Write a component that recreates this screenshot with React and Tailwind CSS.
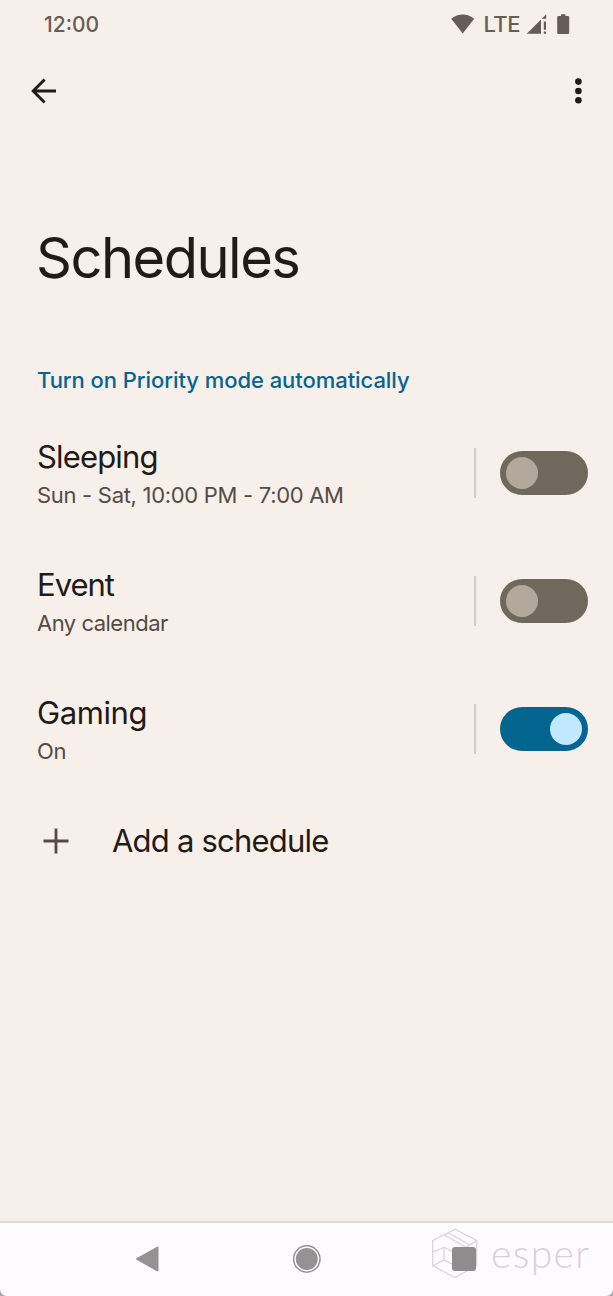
import React, { useState } from "react";

const initialSchedules = [
  {
    id: 1,
    name: "Sleeping",
    nameClass: "tracking-[-0.85px]",
    detail: "Sun - Sat, 10:00 PM - 7:00 AM",
    detailClass: "tracking-[-0.3px]",
    enabled: false,
  },
  {
    id: 2,
    name: "Event",
    nameClass: "tracking-[-1px]",
    detail: "Any calendar",
    detailClass: "tracking-[-0.5px]",
    enabled: false,
  },
  {
    id: 3,
    name: "Gaming",
    nameClass: "tracking-[-0.4px]",
    detail: "On",
    detailClass: "tracking-[-0.3px]",
    enabled: true,
  },
];

const StatusBar = () => (
  <div className="flex h-12 items-center justify-between pl-11 pr-[43px] text-[#665d58]">
    <span className="pt-0.5 text-[21px] font-medium leading-6">12:00</span>
    <div className="flex items-center">
      {/* Wifi */}
      <svg width="24" height="20" viewBox="0 0 24 20" fill="currentColor">
        <path d="M0.2 4.8C7 -1 16.5 -1 23.2 4.8L11.7 19.4Z" />
      </svg>
      <span className="ml-[9px] text-[22px] font-medium leading-6 tracking-[-0.5px]">
        LTE
      </span>
      {/* Signal with no connection */}
      <svg
        className="ml-[7px]"
        width="20"
        height="20"
        viewBox="0 0 20 20"
        fill="currentColor"
      >
        <path d="M-0.4 19.8L14 5.4V19.8Z" />
        <path d="M14.6 4.8L19.2 0.2V4.8Z" />
        <path d="M16.8 7.5H19V15.8H16.8ZM16.8 17.6H19V19.8H16.8Z" />
      </svg>
      {/* Battery */}
      <svg
        className="ml-[10px]"
        width="13"
        height="20"
        viewBox="0 0 13 20"
        fill="currentColor"
      >
        <path d="M4 0.3H8.4V2H11Q12.2 2 12.2 3.2V18.8Q12.2 20 11 20H1.4Q0.2 20 0.2 18.8V3.2Q0.2 2 1.4 2H4Z" />
      </svg>
    </div>
  </div>
);

const AppBar = () => (
  <div className="flex h-[86px] items-center justify-between pl-[31px] pr-[31px] text-[#211a15]">
    <button aria-label="Back">
      <svg
        width="26"
        height="26"
        viewBox="0 0 26 26"
        fill="none"
        stroke="currentColor"
        strokeWidth="2.9"
      >
        <path d="M25 13H2.5M13.6 1.5L2.2 13L13.6 24.5" />
      </svg>
    </button>
    <button aria-label="More options">
      <svg width="8" height="26" viewBox="0 0 8 26" fill="currentColor">
        <circle cx="4.4" cy="3.6" r="3.3" />
        <circle cx="4.4" cy="13" r="3.3" />
        <circle cx="4.4" cy="22.3" r="3.3" />
      </svg>
    </button>
  </div>
);

const Switch = ({ checked, onChange }) => (
  <button
    role="switch"
    aria-checked={checked}
    onClick={onChange}
    className={`flex h-11 w-[88px] items-center rounded-full px-1.5 ${
      checked ? "justify-end bg-[#056591]" : "justify-start bg-[#71685d]"
    }`}
  >
    <span
      className={`h-8 w-8 rounded-full ${
        checked ? "bg-[#c2e8ff]" : "bg-[#b2a99c]"
      }`}
    />
  </button>
);

const ScheduleRow = ({ schedule, onToggle }) => (
  <div className="flex h-32 items-center pl-[37px] pr-[25px]">
    <div className="flex-1 pt-1">
      <h2
        className={`text-[31px] leading-10 text-[#211a15] ${schedule.nameClass}`}
      >
        {schedule.name}
      </h2>
      <p
        className={`text-[22px] leading-9 text-[#544b46] ${schedule.detailClass}`}
      >
        {schedule.detail}
      </p>
    </div>
    <div className="mr-6 h-[50px] w-0.5 bg-[#d3cbc6]" />
    <Switch checked={schedule.enabled} onChange={() => onToggle(schedule.id)} />
  </div>
);

const EsperMark = () => (
  <div className="absolute left-[431px] top-[5px] flex items-center text-[#d6d2d5]">
    <svg
      width="47"
      height="51"
      viewBox="0 0 47 51"
      fill="none"
      stroke="currentColor"
      strokeWidth="1.2"
      strokeLinejoin="round"
    >
      <path d="M24 1.2L45.7 12.5V37.5L24 49.5L1.7 37.7V12.5Z" />
      <path d="M13 6.8L34.7 19.3L45.7 13M17 4.8L39 17" />
      <path d="M1.7 24.3L13 19.3L24 25M13 19.3V32M1.7 37.7L13 32L24 37.5" />
    </svg>
    <span className="-mt-0.5 ml-[13px] font-['Lato',sans-serif] text-[39px] font-light leading-[50px] tracking-[1.4px]">
      esper
    </span>
  </div>
);

const NavigationBar = () => (
  <div className="relative h-[75px] border-t-2 border-[#dfd9d1] bg-[#fdfbfe] text-[#959294]">
    <EsperMark />
    <div className="relative flex h-[72px] items-center pl-[135px]">
      <svg width="24" height="26" viewBox="0 0 24 26" fill="currentColor">
        <path d="M1.5 12.2L22 0.7Q23.5 0.2 23.5 1.7V24.3Q23.5 25.8 22 25.3L1.5 13.8Q0.3 13 1.5 12.2Z" />
      </svg>
      <svg className="ml-[133px]" width="30" height="30" viewBox="0 0 30 30">
        <circle
          cx="14.8"
          cy="15"
          r="13.2"
          fill="none"
          stroke="currentColor"
          strokeWidth="1.5"
        />
        <circle cx="14.8" cy="15" r="11" fill="currentColor" />
      </svg>
      <div className="ml-[130px] h-6 w-6 rounded-[3px] bg-[#8f8c8e]" />
    </div>
    {/* Dark screen corners */}
    <svg
      className="absolute bottom-0 left-0"
      width="7"
      height="7"
      viewBox="0 0 7 7"
      fill="#aaa8aa"
    >
      <path d="M0 0Q0.5 6.5 7 7H0Z" />
    </svg>
    <svg
      className="absolute bottom-0 right-0"
      width="7"
      height="7"
      viewBox="0 0 7 7"
      fill="#aaa8aa"
    >
      <path d="M7 0Q6.5 6.5 0 7H7Z" />
    </svg>
  </div>
);

const App = () => {
  const [schedules, setSchedules] = useState(initialSchedules);

  const toggleSchedule = (id) => {
    setSchedules((prev) =>
      prev.map((item) =>
        item.id === id ? { ...item, enabled: !item.enabled } : item
      )
    );
  };

  return (
    <div className="flex h-[1296px] w-full flex-col bg-[#f7efe9] font-['Inter',sans-serif]">
      <StatusBar />
      <AppBar />

      <main className="flex-1">
        <h1 className="mt-[88px] pl-9 text-[56px] leading-[72px] tracking-[-1.5px] text-[#211a15]">
          Schedules
        </h1>
        <p className="mt-[70px] pl-[37px] text-[22px] font-medium leading-8 tracking-[-0.06px] text-[#056591]">
          Turn on Priority mode automatically
        </p>

        <div className="mt-[13px]">
          {schedules.map((schedule) => (
            <ScheduleRow
              key={schedule.id}
              schedule={schedule}
              onToggle={toggleSchedule}
            />
          ))}
        </div>

        <button className="flex h-24 items-center pl-[43px] text-[#211a15]">
          <svg
            width="26"
            height="26"
            viewBox="0 0 26 26"
            stroke="#544b46"
            strokeWidth="2.8"
          >
            <path d="M0.5 13H25.5M13 0.5V25.5" />
          </svg>
          <span className="ml-[43px] text-[31px] leading-10 tracking-[-0.78px]">
            Add a schedule
          </span>
        </button>
      </main>

      <NavigationBar />
    </div>
  );
};

export default App;
